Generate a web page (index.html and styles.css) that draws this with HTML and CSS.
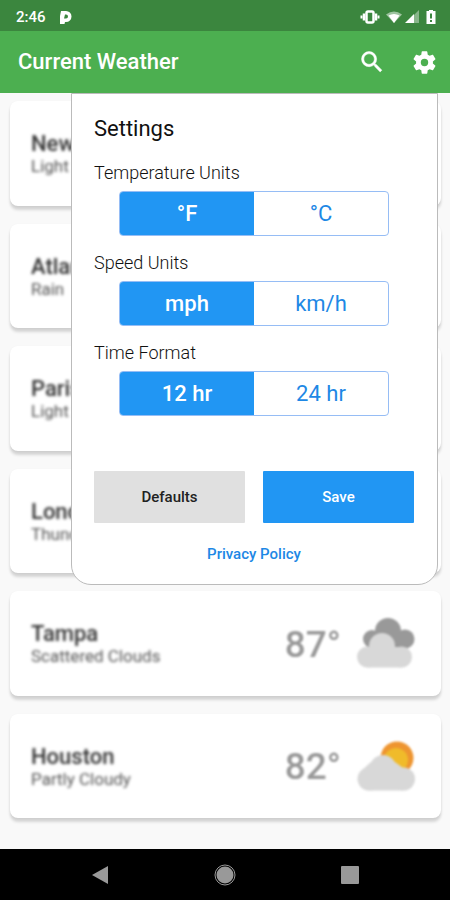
FILE: index.html
```html
<!DOCTYPE html>
<html lang="en">
<head>
<meta charset="utf-8">
<meta name="viewport" content="width=device-width, initial-scale=1">
<title>Current Weather</title>
<link rel="stylesheet" href="styles.css">
</head>
<body>
<div class="status-bar">
  <span class="clock">2:46</span>
  <svg class="app-mark" width="14" height="16" viewBox="0 0 14 16"><path fill="#fff" fill-rule="evenodd" d="M1 15V7l1-5h5a5.500 5.500 0 0 1 0 11H6l-.5 2zM6 5.500L5 9.500h2a2 2 0 0 0 0-4z"/></svg>
  <div class="indicators">
    <svg width="20" height="16" viewBox="0 0 20 16"><rect x="6.500" y="2.500" width="7" height="11" rx="1.500" fill="none" stroke="#fff" stroke-width="2.500"/><path d="M4 4.500v7M16 4.500v7" stroke="#fff" stroke-width="2.500"/><path d="M1.500 6.500v3M18.500 6.500v3" stroke="#fff" stroke-width="2"/></svg>
    <svg class="wifi" width="16" height="14" viewBox="0 0 16 14"><path fill="#fff" fill-opacity=".5" d="M0 4.500Q8-1.500 16 4.500L8 13z"/><path fill="#fff" d="M2.500 5.500Q8 2.500 13.500 5.500L8 13z"/></svg>
    <svg class="signal" width="14" height="14" viewBox="0 0 14 14"><path fill="#fff" fill-opacity=".4" d="M14 0v13H1z"/><path fill="#fff" d="M9 4v9H0z"/></svg>
    <svg class="battery" width="10" height="16" viewBox="0 0 10 16"><path fill="#fff" fill-rule="evenodd" d="M3 1h4v1h2.500v13H.5V2H3zM4 4.500v5h2v-5zM4 11v2h2v-2z"/></svg>
  </div>
</div>
<header class="app-bar">
  <h1 class="app-title">Current Weather</h1>
  <button class="icon-button" type="button" aria-label="Search">
    <svg width="28" height="28" viewBox="0 0 24 24"><path fill="#fff" stroke="#fff" stroke-width=".4" d="M15.500 14h-.79l-.28-.27A6.470 6.470 0 0 0 16 9.500 6.500 6.500 0 1 0 9.500 16c1.610 0 3.090-.59 4.230-1.570l.27.28v.79l5 4.990L20.490 19l-4.990-5zm-6 0C7.010 14 5 11.990 5 9.500S7.010 5 9.500 5 14 7.010 14 9.500 11.990 14 9.500 14z"/></svg>
  </button>
  <button class="icon-button" type="button" aria-label="Settings">
    <svg width="27" height="27" viewBox="0 0 24 24"><path fill="#fff" d="M19.430 12.980c.04-.32.07-.64.07-.98s-.03-.66-.07-.98l2.110-1.650c.19-.15.24-.42.12-.64l-2-3.460c-.12-.22-.39-.3-.61-.22l-2.490 1c-.52-.4-1.080-.73-1.690-.98l-.38-2.650A.488.488 0 0 0 14 2h-4c-.25 0-.46.18-.49.42l-.38 2.650c-.61.25-1.170.59-1.690.98l-2.490-1c-.23-.09-.49 0-.61.22l-2 3.460c-.13.22-.07.49.12.64l2.110 1.650c-.04.32-.07.65-.07.98s.03.66.07.98l-2.110 1.650c-.19.15-.24.42-.12.64l2 3.460c.12.22.39.3.61.22l2.490-1c.52.4 1.080.73 1.690.98l.38 2.650c.03.24.24.42.49.42h4c.25 0 .46-.18.49-.42l.38-2.650c.61-.25 1.170-.59 1.690-.98l2.490 1c.23.09.49 0 .61-.22l2-3.460c.12-.22.07-.49-.12-.64zM12 15.300a3.300 3.300 0 1 1 0-6.600 3.300 3.300 0 0 1 0 6.600z"/></svg>
  </button>
</header>
<main class="content">
  <ul class="cities">
    <li class="card"><div class="blurred"><h2 class="city">New York</h2><p class="sky">Light Rain</p></div></li>
    <li class="card"><div class="blurred"><h2 class="city">Atlanta</h2><p class="sky">Rain</p></div></li>
    <li class="card"><div class="blurred"><h2 class="city">Paris</h2><p class="sky">Light Rain</p></div></li>
    <li class="card"><div class="blurred"><h2 class="city">London</h2><p class="sky">Thunderstorm</p></div></li>
    <li class="card">
      <div class="blurred"><h2 class="city">Tampa</h2><p class="sky">Scattered Clouds</p></div>
      <span class="degrees">87°</span>
      <svg class="sky-icon" width="58" height="50" viewBox="0 0 58 50"><g fill="#999"><circle cx="31" cy="13" r="13"/><circle cx="15" cy="21" r="9"/><circle cx="48" cy="21" r="9.500"/><path d="M15 21l6-9h20l7 3v15.500H15z"/></g><g fill="#d8d8d8"><circle cx="25" cy="28" r="13"/><circle cx="10.500" cy="39" r="10.500"/><circle cx="44.500" cy="39" r="10.500"/><path d="M10 29h35v20.500H10z"/></g></svg>
    </li>
    <li class="card">
      <div class="blurred"><h2 class="city">Houston</h2><p class="sky">Partly Cloudy</p></div>
      <span class="degrees">82°</span>
      <svg class="sky-icon" width="58" height="50" viewBox="0 0 58 50"><circle cx="40" cy="17" r="16.500" fill="#ee9530"/><circle cx="39" cy="19" r="12" fill="#f0bb2a"/><g fill="#d8d8d8"><circle cx="26" cy="27" r="13"/><circle cx="12" cy="38" r="11.500"/><circle cx="46.500" cy="38" r="11.500"/><path d="M5 29l9-8 24 0 8 6v22.500H12z"/></g></svg>
    </li>
  </ul>
  <form class="settings">
    <h2 class="settings-title">Settings</h2>
    <fieldset class="option">
      <legend class="option-name">Temperature Units</legend>
      <div class="toggle">
        <label class="choice"><input type="radio" name="temperature" checked><span>°F</span></label>
        <label class="choice"><input type="radio" name="temperature"><span>°C</span></label>
      </div>
    </fieldset>
    <fieldset class="option">
      <legend class="option-name">Speed Units</legend>
      <div class="toggle">
        <label class="choice"><input type="radio" name="speed" checked><span>mph</span></label>
        <label class="choice"><input type="radio" name="speed"><span>km/h</span></label>
      </div>
    </fieldset>
    <fieldset class="option">
      <legend class="option-name">Time Format</legend>
      <div class="toggle">
        <label class="choice"><input type="radio" name="time" checked><span>12 hr</span></label>
        <label class="choice"><input type="radio" name="time"><span>24 hr</span></label>
      </div>
    </fieldset>
    <div class="actions">
      <button class="action" type="reset">Defaults</button>
      <button class="action action-primary" type="submit">Save</button>
    </div>
    <a class="privacy" href="#">Privacy Policy</a>
  </form>
</main>
<nav class="nav-bar" aria-label="System">
  <button class="nav-button" type="button" aria-label="Back"><svg width="20" height="20" viewBox="0 0 20 20"><path fill="#999" d="M18 1v18L2 10z"/></svg></button>
  <button class="nav-button" type="button" aria-label="Home"><svg width="22" height="22" viewBox="0 0 22 22"><circle cx="11" cy="11" r="10" fill="none" stroke="#999" stroke-width="1"/><circle cx="11" cy="11" r="8.500" fill="#999"/></svg></button>
  <button class="nav-button" type="button" aria-label="Recent apps"><svg width="20" height="20" viewBox="0 0 20 20"><rect x="1" y="1" width="18" height="18" rx="1" fill="#999"/></svg></button>
</nav>
</body>
</html>
```
FILE: styles.css
```css
* { box-sizing: border-box; }

body {
  margin: 0;
  min-height: 100vh;
  display: flex;
  flex-direction: column;
  background: #f9f9f9;
  font-family: Roboto, "Liberation Sans", sans-serif;
  color: #111;
}

h1, h2, p, ul, fieldset, legend { margin: 0; padding: 0; }
button { font: inherit; border: 0; cursor: pointer; }
svg { display: block; }

.status-bar {
  display: flex;
  align-items: center;
  height: 31px;
  padding: 2px 14px 0 16px;
  background: #3b863e;
  color: #fff;
}
.clock { font-size: 15px; font-weight: 500; }
.app-mark { margin-left: 13px; }
.indicators { display: flex; align-items: center; margin-left: auto; }
.wifi { margin-left: 6px; }
.signal { margin-left: 3px; }
.battery { margin-left: 7px; }

.app-bar {
  display: flex;
  align-items: center;
  height: 62px;
  padding: 0 12px 0 18px;
  background: #4caf50;
  color: #fff;
}
.app-title { margin-right: auto; font-size: 22px; line-height: 28px; font-weight: 500; }
.icon-button { display: grid; place-items: center; width: 28px; height: 40px; padding: 0; background: none; }
.icon-button + .icon-button { margin-left: 24px; }

.content { position: relative; flex: 1; display: flex; }
.cities {
  flex: 1;
  display: grid;
  grid-auto-rows: 1fr;
  gap: 18px;
  padding: 8px 9px 31px 10px;
  list-style: none;
}
.card {
  display: flex;
  align-items: center;
  padding: 3px 26px 0 21px;
  border-radius: 8px;
  background: #fff;
  box-shadow: 0 4px 3px rgba(0, 0, 0, .14), 0 1px 3px rgba(0, 0, 0, .05);
}
.blurred { margin-right: auto; filter: blur(1.4px); color: #333; }
.city { font-size: 22px; line-height: 24px; font-weight: 500; }
.sky { font-size: 17px; line-height: 21px; color: #555; }
.degrees { font-size: 37px; line-height: 48px; font-weight: 500; color: #999; filter: blur(1.2px); }
.sky-icon { margin: 0 0 3px 16px; filter: blur(1.2px); }

/* Settings sheet drops down over the city list. */
.settings {
  position: absolute;
  top: 0;
  left: 71px;
  right: 12px;
  padding: 20px 23px 19px 22px;
  border: 1px solid #bbb;
  border-radius: 0 0 20px 20px;
  background: #fff;
}
.settings-title { margin-bottom: 16px; font-size: 22px; line-height: 30px; font-weight: 400; }
.option { min-width: 0; margin-bottom: 14px; border: 0; }
.option-name { font-size: 18px; line-height: 26px; font-weight: 300; }
.toggle {
  display: flex;
  height: 45px;
  margin: 5px 25px 0;
  overflow: hidden;
  border: 1px solid #96bdf5;
  border-radius: 4px;
}
.choice { position: relative; flex: 1; display: flex; cursor: pointer; }
.choice input { position: absolute; inset: 0; margin: 0; opacity: 0; }
.choice span {
  flex: 1;
  display: grid;
  place-items: center;
  font-size: 22px;
  color: #1e88e5;
}
.choice input:checked + span { background: #2196f3; color: #fff; font-weight: 500; }

.actions { display: flex; gap: 18px; margin-top: 55px; }
.action {
  flex: 1;
  height: 52px;
  border-radius: 1px;
  background: #e0e0e0;
  color: #222;
  font-size: 15px;
  font-weight: 500;
}
.action-primary { background: #2196f3; color: #fff; }
.privacy {
  display: block;
  width: fit-content;
  margin: 20px auto 0;
  font-size: 15px;
  font-weight: 500;
  line-height: 22px;
  color: #1e88e5;
  text-decoration: none;
}

.nav-bar {
  display: flex;
  align-items: center;
  justify-content: center;
  gap: 85px;
  height: 51px;
  background: #000;
}
.nav-button { display: grid; place-items: center; width: 40px; height: 40px; padding: 0; background: none; }
```
